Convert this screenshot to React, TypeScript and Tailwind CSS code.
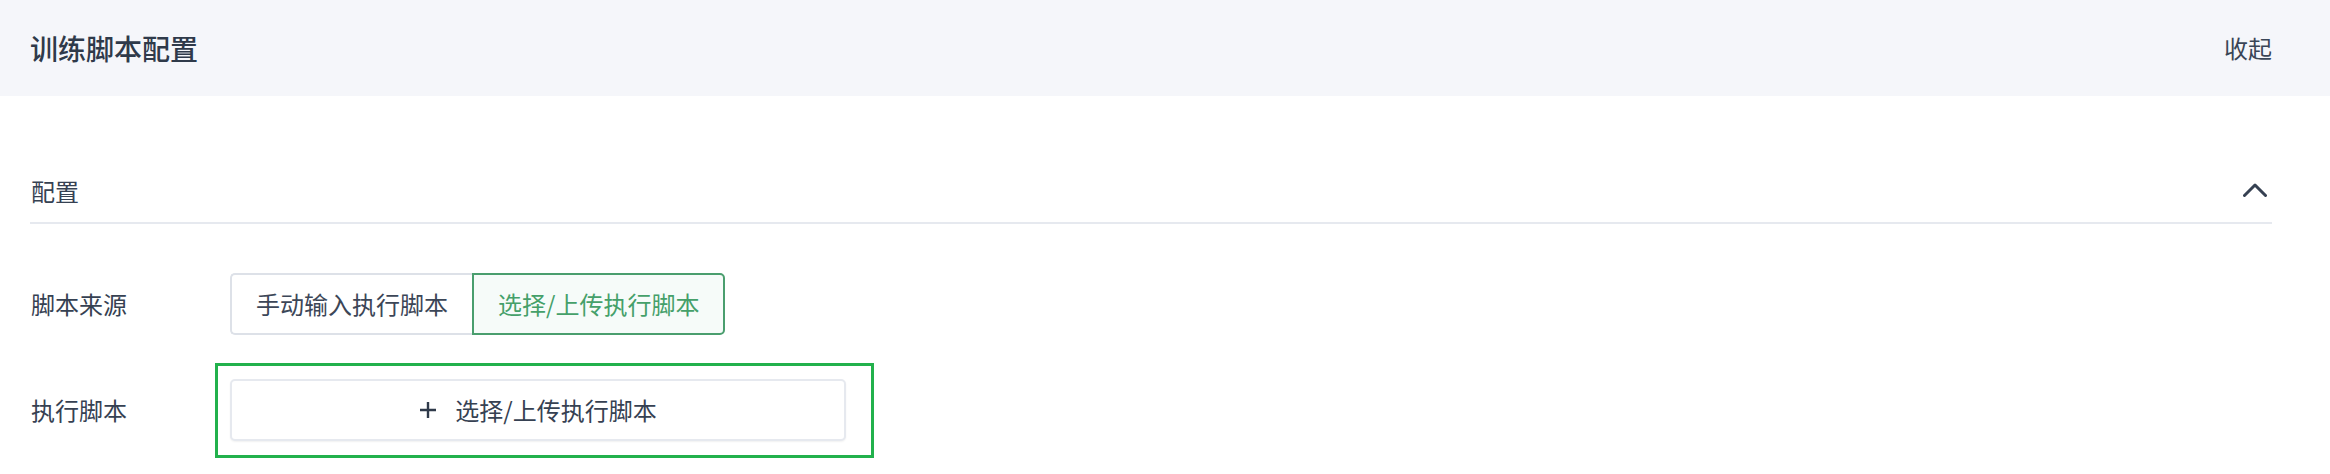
import React, { useState } from 'react';

const font = { fontFamily: '"Noto Sans CJK SC", "Noto Sans", sans-serif' };

function ChevronUp() {
  return (
    <svg width="24" height="14" viewBox="0 0 24 14" fill="none">
      <polyline points="1.5,12.5 12,2 22.5,12.5" stroke="#364152" strokeWidth="3" strokeLinecap="round" strokeLinejoin="round" />
    </svg>
  );
}

function PlusIcon() {
  return (
    <svg width="18" height="18" viewBox="0 0 18 18" fill="none">
      <path d="M9 1v16M1 9h16" stroke="#2f3a4a" strokeWidth="2.4" />
    </svg>
  );
}

export default function App() {
  const [source, setSource] = useState<'manual' | 'upload'>('upload');

  return (
    <div className="w-[2330px] h-[474px] bg-white text-[#364152] overflow-hidden" style={font}>
      <div className="h-[96px] bg-[#f5f6fa] flex items-center justify-between pl-[30px] pr-[58px]">
        <span className="text-[28px] font-medium text-[#2f3a4a]">训练脚本配置</span>
        <span className="text-[24px] text-[#3a4556] cursor-pointer">收起</span>
      </div>

      <div className="pl-[30px] pr-[58px]">
        <div className="mt-[64px] h-[64px] flex items-center justify-between border-b-2 border-[#e6e9ef]">
          <span className="text-[24px] pl-px">配置</span>
          <span className="pr-[5px] pb-[2px]">
            <ChevronUp />
          </span>
        </div>

        <div className="mt-[49px] flex items-center">
          <div className="w-[200px] text-[24px] pl-px">脚本来源</div>
          <div className="flex h-[62px] text-[24px]">
            <button
              onClick={() => setSource('manual')}
              className={
                source === 'manual'
                  ? 'px-6 rounded-l-[5px] border-2 border-[#4a9e6e] bg-[#f6fbf9] text-[#45a06a]'
                  : 'px-6 rounded-l-[5px] border-2 border-r-0 border-[#dde1e8] bg-white text-[#3c4657]'
              }
            >
              手动输入执行脚本
            </button>
            <button
              onClick={() => setSource('upload')}
              className={
                source === 'upload'
                  ? 'px-6 rounded-r-[5px] border-2 border-[#4a9e6e] bg-[#f6fbf9] text-[#45a06a]'
                  : 'px-6 rounded-r-[5px] border-2 border-l-0 border-[#dde1e8] bg-white text-[#3c4657]'
              }
            >
              选择/上传执行脚本
            </button>
          </div>
        </div>

        <div className="mt-[44px] flex items-center">
          <div className="w-[200px] text-[24px] pl-px">执行脚本</div>
          <div className="relative">
            <button className="w-[616px] h-[62px] flex items-center justify-center gap-[18px] rounded-[5px] border-2 border-[#e6e9ef] shadow-[0_1px_2px_rgba(0,0,0,0.06)] bg-white text-[24px] text-[#364152]">
              <PlusIcon />
              <span>选择/上传执行脚本</span>
            </button>
            <div className="absolute -left-[15px] -right-[28px] -top-[16px] -bottom-[17px] border-[3px] border-[#22b14c] pointer-events-none" />
          </div>
        </div>
      </div>
    </div>
  );
}
